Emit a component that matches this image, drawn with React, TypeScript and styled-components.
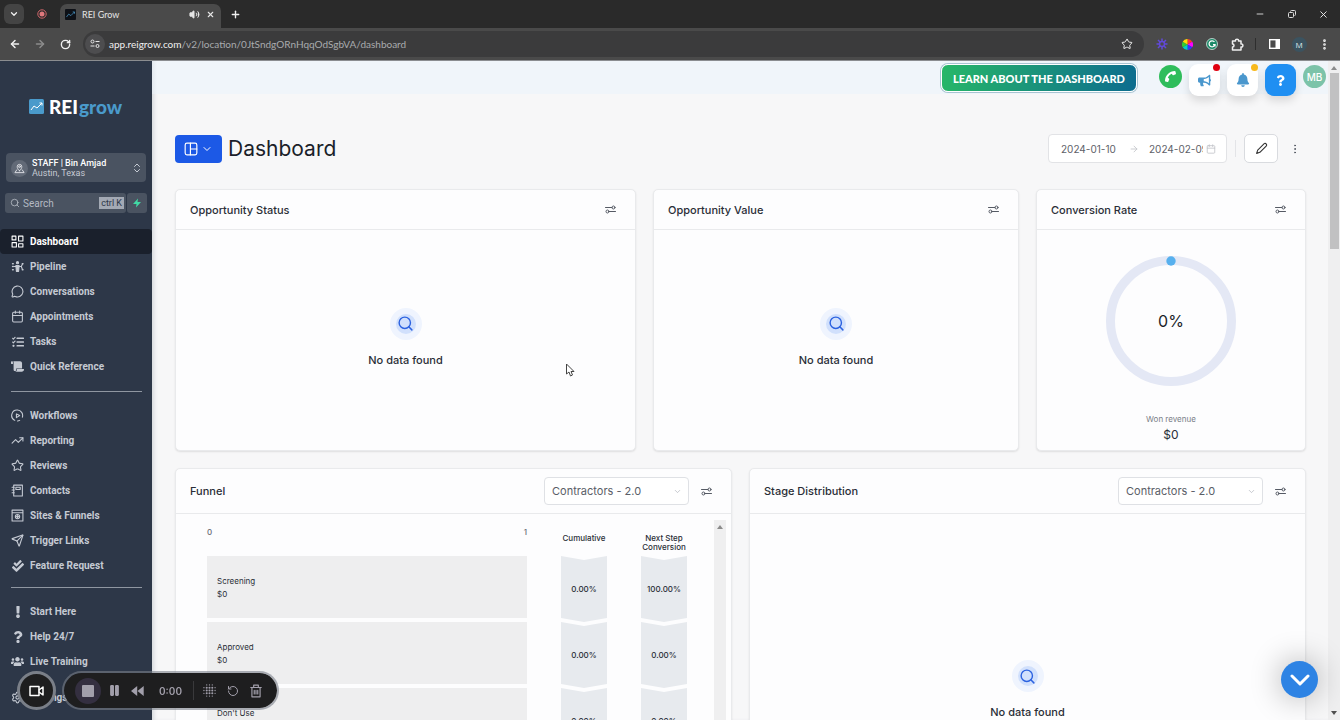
import { useState } from 'react'
import type { ReactNode } from 'react'

import styled, { createGlobalStyle } from 'styled-components'
import {
  ArrowLeft,
  ArrowRight,
  Calendar,
  ChevronDown,
  ChevronsUpDown,
  MessageCircle,
  Minus,
  MoreVertical,
  Pause,
  Plus,
  RotateCw,
  RotateCcw,
  Search,
  Send,
  Settings,
  Star,
  TrendingUp,
  Volume2,
  X,
} from 'lucide-react'
import {
  FaBell,
  FaBullhorn,
  FaCheckDouble,
  FaExclamation,
  FaPhoneAlt,
  FaQuestion,
  FaScroll,
  FaTasks,
  FaUsers,
} from 'react-icons/fa'

const GlobalStyle = createGlobalStyle`
  * {
    box-sizing: border-box;
  }
  body {
    margin: 0;
    background: #f7f7f8;
    font-family: Inter, 'Liberation Sans', sans-serif;
    color: #2a2e37;
  }
  button, input, select {
    font: inherit;
    color: inherit;
    margin: 0;
    padding: 0;
    border: 0;
    background: none;
  }
  a {
    color: inherit;
    text-decoration: none;
  }
  h1, h2, p {
    margin: 0;
    font-weight: 400;
  }
  svg {
    display: block;
    flex-shrink: 0;
  }
`

/* ---------- browser window ---------- */

const Window = styled.div`
  display: flex;
  flex-direction: column;
  height: 100vh;
  overflow: hidden;
`

const TabStrip = styled.div`
  display: flex;
  align-items: flex-end;
  height: 28px;
  padding: 0 8px 0 4px;
  background: #2a2a2a;
  color: #e6e6e6;
  font-family: Lato, sans-serif;
  font-size: 9px;
`

const ChromeButton = styled.button<{ w?: number; dim?: boolean }>`
  display: flex;
  align-items: center;
  justify-content: center;
  width: ${props => props.w || 20}px;
  height: 20px;
  color: ${props => (props.dim ? '#8c8c8c' : '#f0f0f0')};
`

const TabSearch = styled(ChromeButton)`
  margin-bottom: 4px;
  border-radius: 6px;
  background: #444;
`

const RecordTab = styled.div`
  display: flex;
  align-items: center;
  justify-content: center;
  width: 36px;
  height: 28px;
`

const Tab = styled.div`
  display: flex;
  align-items: center;
  gap: 6px;
  width: 161px;
  height: 24px;
  padding: 0 6px 4px 5px;
  border-radius: 7px 7px 0 0;
  background: #4a4a4a;
  span {
    flex: 1;
  }
`

const TabActions = styled.div`
  display: flex;
  align-items: center;
  height: 28px;
  padding-left: 4px;
`

const WindowActions = styled(TabActions)`
  gap: 12px;
  margin-left: auto;
  padding: 0;
`

const Toolbar = styled.div`
  display: flex;
  align-items: center;
  height: 33px;
  padding: 0 6px 0 5px;
  border-bottom: 1px solid #8b8d90;
  background: #4a4a4a;
`

const ToolbarNav = styled.div`
  display: flex;
  gap: 5px;
  margin-right: 8px;
`

const AddressBar = styled.div`
  display: flex;
  flex: 1;
  align-items: center;
  height: 26px;
  padding: 0 7px 0 2px;
  border-radius: 13px;
  background: #3b3b3c;
  color: #a9abae;
  font-family: Lato, sans-serif;
  font-size: 10px;
  p {
    flex: 1;
    padding-left: 4px;
  }
  b {
    color: #f0f0f0;
    font-weight: 400;
  }
`

const SiteInfo = styled.span`
  display: flex;
  align-items: center;
  justify-content: center;
  width: 20px;
  height: 20px;
  border-radius: 50%;
  background: #4d4d4f;
`

const Extensions = styled.div`
  display: flex;
  align-items: center;
  gap: 5px;
  margin-left: 8px;
`

const Divider = styled.span`
  width: 1px;
  height: 12px;
  margin: 0 3px;
  background: #2e2e2e;
`

const ProfileDot = styled.span`
  display: flex;
  align-items: center;
  justify-content: center;
  width: 15px;
  height: 15px;
  border-radius: 50%;
  background: #3b5360;
  color: #dfe7ea;
  font-family: 'Open Sans', sans-serif;
  font-size: 8px;
`

/* ---------- sidebar ---------- */

const Page = styled.div`
  display: flex;
  flex: 1;
  min-height: 0;
`

const Sidebar = styled.aside`
  display: flex;
  flex-direction: column;
  width: 152px;
  overflow: hidden;
  background: #2d3748;
  color: #c5cad3;
  font-family: Roboto, sans-serif;
`

const Logo = styled.a`
  display: flex;
  align-items: center;
  gap: 5px;
  height: 92px;
  padding: 0 0 2px 29px;
  color: #fff;
  font-family: Lato, sans-serif;
  font-size: 19px;
  font-weight: 900;
  b {
    padding-left: 1px;
    color: #4a9acb;
    font-weight: 900;
  }
`

const LocationButton = styled.button`
  display: flex;
  align-items: center;
  gap: 4px;
  height: 29px;
  margin: 0 6px 11px;
  padding: 1px 3px 0 5px;
  border-radius: 4px;
  background: #4a5361;
  text-align: left;
  font-size: 9px;
  line-height: 10px;
  span {
    flex: 1;
  }
  b {
    display: block;
    color: #fff;
    font-weight: 500;
  }
`

const PinBadge = styled.i`
  display: flex;
  align-items: center;
  justify-content: center;
  width: 17px;
  height: 17px;
  border-radius: 50%;
  background: #626a77;
  color: #e2e5e9;
`

const SearchRow = styled.div`
  display: flex;
  gap: 1px;
  height: 20px;
  margin: 0 5px 16px;
`

const SearchBox = styled.label`
  display: flex;
  flex: 1;
  align-items: center;
  gap: 3px;
  min-width: 0;
  padding: 0 2px 0 5px;
  border-radius: 3px;
  background: #4a5361;
  color: #b4bac3;
  font-size: 10px;
  input {
    flex: 1;
    min-width: 0;
  }
  input::placeholder {
    color: #b4bac3;
    opacity: 1;
  }
  kbd {
    padding: 0 2px;
    background: #a3a9b4;
    color: #2d3748;
    font-family: Roboto, sans-serif;
    font-size: 9px;
    line-height: 12px;
  }
`

const BoltButton = styled.button`
  display: flex;
  align-items: center;
  justify-content: center;
  width: 20px;
  border-radius: 3px;
  background: #4a5361;
  color: #41d9a5;
`

const NavGroup = styled.nav<{ gap: number }>`
  display: flex;
  flex-direction: column;
  padding-bottom: ${props => props.gap}px;
`

const NavLink = styled.a<{ active?: boolean }>`
  display: flex;
  align-items: center;
  gap: 6px;
  height: 25px;
  padding-left: 11px;
  border-radius: 4px;
  background: ${props => (props.active ? '#1a202c' : 'transparent')};
  color: ${props => (props.active ? '#fff' : '#c5cad3')};
  font-size: 10px;
  font-weight: 700;
`

const NavIcon = styled.i`
  display: flex;
  justify-content: center;
  width: 13px;
`

const Rule = styled.hr`
  width: 131px;
  height: 1px;
  margin: 0 auto 11px;
  border: 0;
  background: #8f96a1;
`

/* ---------- main column ---------- */

const Main = styled.main`
  flex: 1;
  min-width: 0;
  overflow: hidden;
  background: #f7f7f8;
  box-shadow: inset 4px 0 4px -2px #d5d8dd;
`

const TopBar = styled.header`
  display: flex;
  align-items: flex-start;
  justify-content: flex-end;
  gap: 7px;
  height: 33px;
  padding: 3px 2px 0;
  background: linear-gradient(90deg, #e3e9ef, #f0f5fa 5px);
`

const LearnButton = styled.button`
  height: 28px;
  margin-right: 15px;
  padding: 0 11px;
  border: 1px solid #fff;
  border-radius: 7px;
  background: linear-gradient(100deg, #27b768, #0d6c8f);
  box-shadow: 0 0 0 1px #a9c4d2;
  color: #fff;
  font-family: Lato, sans-serif;
  font-size: 11px;
  font-weight: 900;
  white-space: nowrap;
`

const RoundBadge = styled.button<{ bg: string }>`
  display: flex;
  align-items: center;
  justify-content: center;
  width: 23px;
  height: 23px;
  margin-top: 1px;
  border-radius: 50%;
  background: ${props => props.bg};
  color: #fff;
  font-size: 10px;
  font-weight: 500;
`

const TileButton = styled.button<{ filled?: boolean }>`
  position: relative;
  display: flex;
  align-items: center;
  justify-content: center;
  width: 31px;
  height: 32px;
  border-radius: 9px;
  background: ${props => (props.filled ? '#1f8ff2' : '#fff')};
  box-shadow: 0 5px 8px #0000001f;
  color: ${props => (props.filled ? '#fff' : '#4a97cd')};
`

const Dot = styled.span<{ color: string }>`
  position: absolute;
  top: 0;
  right: 0;
  width: 7px;
  height: 7px;
  border-radius: 50%;
  background: ${props => props.color};
`

const Content = styled.div`
  padding: 40px 22px 0 23px;
`

const TitleRow = styled.div`
  display: flex;
  align-items: center;
  height: 29px;
  margin-bottom: 26px;
  padding-right: 3px;
  h1 {
    flex: 1;
    padding-left: 6px;
    color: #1b1f2a;
    font-size: 21px;
    line-height: 29px;
  }
`

const LayoutButton = styled.button`
  display: flex;
  align-items: center;
  justify-content: center;
  gap: 3px;
  width: 47px;
  height: 28px;
  border-radius: 4px;
  background: #1c59e6;
  color: #fff;
`

const DateRange = styled.div`
  display: flex;
  align-items: center;
  width: 179px;
  height: 29px;
  padding: 0 10px 0 12px;
  border: 1px solid #e2e3e6;
  border-radius: 4px;
  background: #fff;
  color: #c0c3c8;
  input {
    width: 68px;
    color: #5d6168;
    font-size: 10px;
  }
  input:last-of-type {
    width: 54px;
    margin-left: 10px;
  }
  svg:last-of-type {
    margin-left: auto;
  }
`

const Separator = styled.span`
  width: 1px;
  height: 17px;
  margin: 0 8px;
  background: #e3e4e7;
`

const EditButton = styled.button`
  display: flex;
  align-items: center;
  justify-content: center;
  width: 34px;
  height: 29px;
  margin-right: 9px;
  border: 1px solid #d9dbdf;
  border-radius: 5px;
  background: #fff;
  color: #333;
`

const IconButton = styled.button`
  display: flex;
  align-items: center;
  justify-content: center;
  width: 16px;
  height: 20px;
  color: #555a64;
`

const CardRow = styled.div<{ columns: string }>`
  display: grid;
  grid-template-columns: ${props => props.columns};
  gap: 17px;
  margin-bottom: 17px;
`

const CardBox = styled.section`
  display: flex;
  flex-direction: column;
  min-width: 0;
  border: 1px solid #e9eaec;
  border-radius: 5px;
  background: #fdfdfe;
  box-shadow: 0 1px 2px #0000001a;
`

const CardHeader = styled.div<{ tall?: boolean }>`
  display: flex;
  align-items: center;
  gap: 9px;
  height: ${props => (props.tall ? 45 : 40)}px;
  padding: 0 17px 0 14px;
  border-bottom: 1px solid #e9eaec;
  h2 {
    flex: 1;
    font-size: 11px;
    font-weight: 500;
  }
`

const CardBody = styled.div<{ h: number; top?: number; bottom?: number }>`
  display: flex;
  flex-direction: column;
  align-items: center;
  justify-content: center;
  height: ${props => props.h}px;
  padding-top: ${props => props.top || 0}px;
  padding-bottom: ${props => props.bottom || 0}px;
`

const Halo = styled.span`
  display: flex;
  align-items: center;
  justify-content: center;
  width: 32px;
  height: 32px;
  margin-bottom: 11px;
  border: 6px solid #eff4fe;
  border-radius: 50%;
  background: #d1e0fc;
  color: #2c62e0;
`

const EmptyText = styled.p`
  font-size: 11px;
  font-weight: 500;
  line-height: 18px;
`

const SelectBox = styled.label`
  display: flex;
  align-items: center;
  width: 145px;
  height: 28px;
  padding: 0 6px 0 7px;
  border: 1px solid #dfe1e5;
  border-radius: 4px;
  background: #fff;
  color: #b5b9c0;
  font-size: 11px;
  select {
    flex: 1;
    min-width: 0;
    appearance: none;
    color: #5a5e67;
  }
`

const Gauge = styled.div`
  display: grid;
  place-items: center;
  margin-bottom: 26px;
  > * {
    grid-area: 1 / 1;
  }
  strong {
    color: #1b1f2a;
    font-size: 16px;
    font-weight: 400;
  }
`

const Caption = styled.p`
  color: #7a7e87;
  font-size: 8px;
  line-height: 14px;
`

const Amount = styled.p`
  font-size: 12px;
  line-height: 18px;
`

const FunnelBody = styled.div`
  display: flex;
  align-items: flex-start;
  height: 355px;
  padding: 6px 5px 0 31px;
`

const FunnelGrid = styled.div`
  display: grid;
  flex: 1;
  grid-template-columns: 1fr 46px 46px;
  grid-template-rows: 36px;
  grid-auto-rows: 66px;
  column-gap: 34px;
  font-size: 8px;
  font-weight: 500;
  line-height: 9px;
`

const FunnelHead = styled.div`
  display: grid;
  grid-column: 1 / -1;
  grid-template-columns: subgrid;
  padding-top: 8px;
  text-align: center;
`

const FunnelScale = styled.div`
  display: flex;
  justify-content: space-between;
  color: #6a6e76;
`

const HeadLabel = styled.span`
  display: flex;
  justify-content: center;
  padding-top: 6px;
`

const Stage = styled.div`
  height: 62px;
  padding: 19px 10px;
  background: #eeeeef;
  line-height: 13px;
`

const Percent = styled.div`
  display: flex;
  align-items: center;
  justify-content: center;
  height: 66px;
  background: #e7eaee;
  clip-path: polygon(0 0, 50% 4px, 100% 0, 100% 62px, 50% 66px, 0 62px);
`

const ScrollTrack = styled.div`
  display: flex;
  flex-direction: column;
  align-items: center;
  justify-content: space-between;
  width: 12px;
  height: 100%;
  padding: 5px 0;
  background: #efeff0;
`

const FunnelTrack = styled(ScrollTrack)`
  margin-left: 27px;
`

const ScrollThumb = styled.div`
  width: 9px;
  height: 176px;
  margin: 3px 0 auto;
  background: #c1c1c2;
`

/* ---------- things floating over the page ---------- */

const RecorderBar = styled.div`
  position: fixed;
  bottom: 10px;
  left: 17px;
  display: flex;
  align-items: center;
  gap: 6px;
`

const CameraButton = styled.button`
  display: flex;
  align-items: center;
  justify-content: center;
  width: 39px;
  height: 39px;
  border: 3px solid #7a7f88;
  border-radius: 50%;
  background: #1e1e1f;
  color: #fff;
`

const RecorderPill = styled.div`
  display: flex;
  align-items: center;
  height: 39px;
  padding: 0 10px 0 11px;
  border: 2px solid #7a7f8899;
  border-radius: 20px;
  background: #1e1e1f;
  background-clip: padding-box;
  color: #a29fab;
  font-size: 10px;
  font-weight: 600;
  time {
    width: 43px;
    text-align: center;
  }
`

const RecorderButton = styled.button<{ active?: boolean }>`
  display: flex;
  align-items: center;
  justify-content: center;
  width: ${props => (props.active ? 26 : 23)}px;
  height: 26px;
  margin-right: ${props => (props.active ? 2 : 0)}px;
  border-radius: 50%;
  background: ${props => (props.active ? '#342f40' : 'transparent')};
`

const PillDivider = styled.span`
  width: 1px;
  height: 19px;
  margin: 0 4px 0 1px;
  background: #39393b;
`

const HelpFab = styled.button`
  position: fixed;
  right: 22px;
  bottom: 22px;
  display: flex;
  align-items: center;
  justify-content: center;
  width: 37px;
  height: 37px;
  border-radius: 50%;
  background: #2d83e4;
  box-shadow: 0 0 32px #00000055;
  color: #fff;
`

const Pointer = styled.svg`
  position: fixed;
  top: 363px;
  left: 565px;
`

/* ---------- icons ---------- */

const stroke = {
  fill: 'none',
  stroke: 'currentColor',
  strokeLinecap: 'round' as const,
  strokeLinejoin: 'round' as const,
}

function Svg({ size = 13, box = 24, children }: any) {
  return (
    <svg
      width={size}
      height={size}
      viewBox={`0 0 ${box} ${box}`}
      strokeWidth={2}
      {...stroke}
    >
      {children}
    </svg>
  )
}

const SlidersIcon = () => (
  <svg width="11" height="9" viewBox="0 0 22 18" strokeWidth={2} {...stroke}>
    <path d="M1 5h13M8 13h13" />
    <circle cx="17" cy="5" r="3" />
    <circle cx="5" cy="13" r="3" />
  </svg>
)

const GridIcon = () => (
  <Svg>
    <path d="M2 2h7v7H2zM14 2h8v9h-8zM2 14h8v8H2zM14 16h8v6h-8z" />
  </Svg>
)

const PipelineIcon = () => (
  <Svg>
    <circle cx="12" cy="5" r="2" fill="currentColor" />
    <path d="M9 10h6l-1 11h-4z" fill="currentColor" />
    <path d="M5 12h4M15 12h4M19 12l2-4M19 12l2 5" />
    <path d="M3 7h1M3 12h1M3 18h1M21 7h1M21 18h1" strokeWidth={3} />
  </Svg>
)

const WorkflowIcon = () => (
  <Svg>
    <path d="M7 21A10 10 0 0 1 12 2a10 10 0 0 1 9 13" />
    <path d="M12 22a10 10 0 0 0 4-1" />
    <path d="M10 9v7l6-4z" />
  </Svg>
)

const ContactsIcon = () => (
  <Svg>
    <path d="M5 2h16v20H5zM9 6h8v4H9z" />
    <path d="M2 6h4M2 11h4M2 16h4" />
  </Svg>
)

const SitesIcon = () => (
  <Svg>
    <path d="M2 2h20v20H2zM2 7h20" />
    <circle cx="12" cy="14" r="4" />
    <path d="M12 12v4M10 14h4" />
  </Svg>
)

const LogoIcon = ({ size, bg }: { size: number; bg: string }) => (
  <svg width={size} height={size} viewBox="0 0 15 15">
    <rect width="15" height="15" rx="1.5" fill={bg} />
    <path
      d="M2 11l3-4 3 2 5-5M10.5 4H13v2.5"
      fill="none"
      stroke={bg === '#0d1016' ? '#4a9acb' : '#fff'}
    />
  </svg>
)

const PinIcon = () => (
  <Svg size={11}>
    <path d="M12 17c-4-4-5-6-5-9a5 5 0 0 1 10 0c0 3-1 5-5 9z" />
    <circle cx="12" cy="8" r="2" />
    <path d="M6 15l-4 6h20l-4-6" />
  </Svg>
)

const BoltIcon = () => (
  <svg width="10" height="10" viewBox="0 0 20 20" fill="currentColor">
    <path d="M12 1L2 12h7l-1 7L18 8h-7z" />
  </svg>
)

const LayoutIcon = () => (
  <Svg size={14}>
    <rect x="2" y="2" width="20" height="20" rx="3" />
    <path d="M11 2v20M11 12h11" />
  </Svg>
)

const PencilIcon = () => (
  <Svg size={13}>
    <path d="M3 21l2-6L17 3c2-2 6 2 4 4L9 19z" />
  </Svg>
)

const PuzzleIcon = () => (
  <svg width="13" height="13" viewBox="0 0 26 26" strokeWidth={3} {...stroke}>
    <path d="M3 6h6c-1-5 7-5 6 0h5v6c5-1 5 7 0 6v6H3v-6c4 0 4-6 0-6z" />
  </svg>
)

const TuneIcon = () => (
  <svg width="10" height="10" viewBox="0 0 20 20" fill="none" stroke="#e6e6e6" strokeWidth="2">
    <circle cx="5" cy="5" r="3" />
    <circle cx="15" cy="14" r="3" />
    <path d="M11 5h8M1 14h8" />
  </svg>
)

const TargetIcon = () => (
  <svg width="10" height="10" viewBox="0 0 10 10">
    <circle cx="5" cy="5" r="4.200" fill="none" stroke="#d0666b" />
    <circle cx="5" cy="5" r="2.500" fill="#e0797d" />
  </svg>
)

const FlowerIcon = () => (
  <svg width="12" height="12" viewBox="0 0 24 24" stroke="#6149d8" strokeWidth="3" fill="none">
    <path d="M12 1v6M12 17v6M1 12h6M17 12h6M4 4l4 4M16 16l4 4M20 4l-4 4M8 16l-4 4" />
    <circle cx="12" cy="12" r="5" />
  </svg>
)

const wheel = ['#f33', '#f0f', '#33f', '#0cc', '#3c3', '#fd0']

const WheelIcon = () => (
  <svg width="11" height="11" viewBox="-10 -10 20 20">
    {wheel.map((color, i) => (
      <path
        key={color}
        d="M0 0L0-10A10 10 0 0 1 8.700-5z"
        fill={color}
        transform={`rotate(${i * 60})`}
      />
    ))}
  </svg>
)

const GrammarIcon = () => (
  <svg width="12" height="12" viewBox="0 0 24 24" fill="none" strokeWidth="2.500">
    <circle cx="12" cy="12" r="11" fill="#1b8a68" stroke="#dfeee9" strokeWidth="1.500" />
    <path d="M17 8a6 6 0 1 0 1 5h-4M18 13v4" stroke="#fff" />
  </svg>
)

const PanelIcon = () => (
  <svg width="11" height="10" viewBox="0 0 11 10">
    <rect x=".7" y=".7" width="9.600" height="8.600" fill="none" stroke="#fff" strokeWidth="1.400" />
    <path d="M6.500 1H10v8H6.500z" fill="#fff" />
  </svg>
)

const RestoreIcon = () => (
  <svg width="8" height="8" viewBox="0 0 8 8" fill="none" stroke="#ddd">
    <rect x=".5" y="2.500" width="5" height="5" rx="1" />
    <path d="M2.500 1.500Q2.500.500 3.500.500h3q1 0 1 1v3q0 1-1 1" />
  </svg>
)

const Triangle = ({ down, dark }: { down?: boolean; dark?: boolean }) => (
  <svg width="6" height="4" viewBox="0 0 6 4" fill={dark ? '#505050' : '#8b8b8b'}>
    <path d={down ? 'M0 0h6L3 4z' : 'M0 4h6L3 0z'} />
  </svg>
)

const CameraIcon = () => (
  <svg width="15" height="12" viewBox="0 0 15 12" strokeWidth="1.500" {...stroke}>
    <rect x="1" y="1.500" width="9" height="9" />
    <path d="M10 5l4-3v8l-4-3" />
  </svg>
)

const RewindIcon = () => (
  <svg width="13" height="10" viewBox="0 0 13 10" fill="currentColor">
    <path d="M6.200 0v10L0 5zM12.700 0v10L6.500 5z" />
  </svg>
)

const BlurIcon = () => (
  <svg width="13" height="13" viewBox="0 0 14 14" fill="currentColor">
    {[1, 4, 7, 10, 13].map(x =>
      [1, 4, 7, 10, 13].map(y => {
        const edge = [x, y].filter(n => n === 1 || n === 13).length
        // corners stay empty
        if (edge === 2) return null
        return <circle key={`${x}-${y}`} cx={x} cy={y} r={edge ? 0.7 : 1.1} />
      }),
    )}
  </svg>
)

const TrashIcon = () => (
  <Svg size={14}>
    <path d="M3 6h18M8 6V2h8v4M5 6v16h14V6M9 11v6M12 11v6M15 11v6" />
  </Svg>
)

/* ---------- data ---------- */

type NavItem = { label: string; icon: ReactNode }

const crmLinks: NavItem[] = [
  { label: 'Dashboard', icon: <GridIcon /> },
  { label: 'Pipeline', icon: <PipelineIcon /> },
  { label: 'Conversations', icon: <MessageCircle size={13} /> },
  { label: 'Appointments', icon: <Calendar size={13} /> },
  { label: 'Tasks', icon: <FaTasks size={12} /> },
  { label: 'Quick Reference', icon: <FaScroll size={13} /> },
]

const toolLinks: NavItem[] = [
  { label: 'Workflows', icon: <WorkflowIcon /> },
  { label: 'Reporting', icon: <TrendingUp size={13} /> },
  { label: 'Reviews', icon: <Star size={13} /> },
  { label: 'Contacts', icon: <ContactsIcon /> },
  { label: 'Sites & Funnels', icon: <SitesIcon /> },
  { label: 'Trigger Links', icon: <Send size={13} /> },
  { label: 'Feature Request', icon: <FaCheckDouble size={12} /> },
]

const helpLinks: NavItem[] = [
  { label: 'Start Here', icon: <FaExclamation size={12} /> },
  { label: 'Help 24/7', icon: <FaQuestion size={12} /> },
  { label: 'Live Training', icon: <FaUsers size={13} /> },
]

const stages = [
  { name: 'Screening', value: '$0', cumulative: '0.00%', next: '100.00%' },
  { name: 'Approved', value: '$0', cumulative: '0.00%', next: '0.00%' },
  { name: "Don't Use", value: '$0', cumulative: '0.00%', next: '0.00%' },
]

/* ---------- parts ---------- */

function BrowserChrome() {
  return (
    <>
      <TabStrip>
        <TabSearch aria-label="Search tabs">
          <ChevronDown size={10} strokeWidth={3} />
        </TabSearch>
        <RecordTab>
          <TargetIcon />
        </RecordTab>
        <Tab>
          <LogoIcon size={11} bg="#0d1016" />
          <span>REI Grow</span>
          <Volume2 size={11} fill="currentColor" />
          <X size={9} strokeWidth={3} />
        </Tab>
        <TabActions>
          <ChromeButton aria-label="New tab">
            <Plus size={11} strokeWidth={3} />
          </ChromeButton>
        </TabActions>
        <WindowActions>
          <ChromeButton aria-label="Minimize">
            <Minus size={10} />
          </ChromeButton>
          <ChromeButton aria-label="Restore">
            <RestoreIcon />
          </ChromeButton>
          <ChromeButton w={18} aria-label="Close">
            <X size={11} />
          </ChromeButton>
        </WindowActions>
      </TabStrip>
      <Toolbar>
        <ToolbarNav>
          <ChromeButton aria-label="Back">
            <ArrowLeft size={12} strokeWidth={3} />
          </ChromeButton>
          <ChromeButton dim aria-label="Forward">
            <ArrowRight size={12} strokeWidth={3} />
          </ChromeButton>
          <ChromeButton aria-label="Reload">
            <RotateCw size={11} strokeWidth={3} />
          </ChromeButton>
        </ToolbarNav>
        <AddressBar>
          <SiteInfo>
            <TuneIcon />
          </SiteInfo>
          <p>
            <b>app.reigrow.com</b>/v2/location/0JtSndgORnHqqOdSgbVA/dashboard
          </p>
          <ChromeButton aria-label="Bookmark">
            <Star size={12} />
          </ChromeButton>
        </AddressBar>
        <Extensions>
          <ChromeButton aria-label="Recorder">
            <FlowerIcon />
          </ChromeButton>
          <ChromeButton aria-label="Color picker">
            <WheelIcon />
          </ChromeButton>
          <ChromeButton aria-label="Grammar">
            <GrammarIcon />
          </ChromeButton>
          <ChromeButton aria-label="Extensions">
            <PuzzleIcon />
          </ChromeButton>
          <Divider />
          <ChromeButton aria-label="Side panel">
            <PanelIcon />
          </ChromeButton>
          <ChromeButton aria-label="Profile">
            <ProfileDot>M</ProfileDot>
          </ChromeButton>
          <ChromeButton aria-label="Menu">
            <MoreVertical size={13} strokeWidth={3} />
          </ChromeButton>
        </Extensions>
      </Toolbar>
    </>
  )
}

function NavLinks({ items, active }: { items: NavItem[]; active?: string }) {
  return (
    <>
      {items.map(item => (
        <NavLink key={item.label} href="#" active={item.label === active}>
          <NavIcon>{item.icon}</NavIcon>
          {item.label}
        </NavLink>
      ))}
    </>
  )
}

function SideMenu() {
  return (
    <Sidebar>
      <Logo href="#">
        <LogoIcon size={15} bg="#4a9acb" />
        <span>
          REI<b>grow</b>
        </span>
      </Logo>
      <LocationButton>
        <PinBadge>
          <PinIcon />
        </PinBadge>
        <span>
          <b>STAFF | Bin Amjad</b>
          Austin, Texas
        </span>
        <ChevronsUpDown size={12} />
      </LocationButton>
      <SearchRow>
        <SearchBox>
          <Search size={10} />
          <input placeholder="Search" aria-label="Search" />
          <kbd>ctrl K</kbd>
        </SearchBox>
        <BoltButton aria-label="Quick actions">
          <BoltIcon />
        </BoltButton>
      </SearchRow>
      <NavGroup gap={12}>
        <NavLinks items={crmLinks} active="Dashboard" />
      </NavGroup>
      <Rule />
      <NavGroup gap={9}>
        <NavLinks items={toolLinks} />
      </NavGroup>
      <Rule />
      <NavGroup gap={11}>
        <NavLinks items={helpLinks} />
      </NavGroup>
      <NavLink href="#">
        <NavIcon>
          <Settings size={13} />
        </NavIcon>
        Settings
      </NavLink>
    </Sidebar>
  )
}

function Card({ title, tall, children }: any) {
  const [board, setBoard] = useState('Contractors - 2.0')

  return (
    <CardBox>
      <CardHeader tall={tall}>
        <h2>{title}</h2>
        {tall && (
          <SelectBox>
            <select
              aria-label={`${title} pipeline`}
              value={board}
              onChange={e => setBoard(e.target.value)}
            >
              <option>Contractors - 2.0</option>
            </select>
            <ChevronDown size={9} />
          </SelectBox>
        )}
        <IconButton aria-label={`${title} settings`}>
          <SlidersIcon />
        </IconButton>
      </CardHeader>
      {children}
    </CardBox>
  )
}

function NoData({ h }: { h: number }) {
  return (
    <CardBody h={h} bottom={4}>
      <Halo>
        <Search size={17} />
      </Halo>
      <EmptyText>No data found</EmptyText>
    </CardBody>
  )
}

function ConversionRate() {
  return (
    <CardBody h={220} top={20}>
      <Gauge>
        <svg width="130" height="130" viewBox="0 0 130 130">
          <circle cx="65" cy="65" r="60.500" fill="none" stroke="#e4e8f5" strokeWidth="9" />
          <circle cx="65" cy="5" r="4.700" fill="#57b0ee" />
        </svg>
        <strong>0%</strong>
      </Gauge>
      <Caption>Won revenue</Caption>
      <Amount>$0</Amount>
    </CardBody>
  )
}

function Funnel() {
  return (
    <FunnelBody>
      <FunnelGrid>
        <FunnelHead>
          <FunnelScale>
            <span>0</span>
            <span>1</span>
          </FunnelScale>
          <HeadLabel>Cumulative</HeadLabel>
          <HeadLabel>Next Step Conversion</HeadLabel>
        </FunnelHead>
        {stages.map(stage => (
          <FunnelRow key={stage.name} {...stage} />
        ))}
      </FunnelGrid>
      <FunnelTrack>
        <Triangle />
      </FunnelTrack>
    </FunnelBody>
  )
}

function FunnelRow({ name, value, cumulative, next }: any) {
  return (
    <>
      <Stage>
        <p>{name}</p>
        <p>{value}</p>
      </Stage>
      <Percent>{cumulative}</Percent>
      <Percent>{next}</Percent>
    </>
  )
}

function Recorder() {
  return (
    <RecorderBar>
      <CameraButton aria-label="Camera">
        <CameraIcon />
      </CameraButton>
      <RecorderPill>
        <RecorderButton active aria-label="Stop">
          <svg width="12" height="12" fill="currentColor">
            <rect width="12" height="12" rx="1" />
          </svg>
        </RecorderButton>
        <RecorderButton aria-label="Pause">
          <Pause size={13} fill="currentColor" />
        </RecorderButton>
        <RecorderButton aria-label="Rewind">
          <RewindIcon />
        </RecorderButton>
        <time>0:00</time>
        <PillDivider />
        <RecorderButton aria-label="Blur">
          <BlurIcon />
        </RecorderButton>
        <RecorderButton aria-label="Restart">
          <RotateCcw size={12} />
        </RecorderButton>
        <RecorderButton aria-label="Delete">
          <TrashIcon />
        </RecorderButton>
      </RecorderPill>
    </RecorderBar>
  )
}

export default function App() {
  return (
    <Window>
      <GlobalStyle />
      <BrowserChrome />
      <Page>
        <SideMenu />
        <Main>
          <TopBar>
            <LearnButton>LEARN ABOUT THE DASHBOARD</LearnButton>
            <RoundBadge bg="#2fbd5b" aria-label="Call">
              <FaPhoneAlt size={11} transform="rotate(90)" />
            </RoundBadge>
            <TileButton aria-label="Announcements">
              <FaBullhorn size={13} />
              <Dot color="#e0000f" />
            </TileButton>
            <TileButton aria-label="Notifications">
              <FaBell size={14} />
              <Dot color="#f8b91c" />
            </TileButton>
            <TileButton filled aria-label="Help">
              <FaQuestion size={11} />
            </TileButton>
            <RoundBadge bg="#7cc3a9">MB</RoundBadge>
          </TopBar>
          <Content>
            <TitleRow>
              <LayoutButton aria-label="Switch dashboard">
                <LayoutIcon />
                <ChevronDown size={12} />
              </LayoutButton>
              <h1>Dashboard</h1>
              <DateRange>
                <input aria-label="Start date" defaultValue="2024-01-10" />
                <ArrowRight size={10} />
                <input aria-label="End date" defaultValue="2024-02-09" />
                <Calendar size={10} />
              </DateRange>
              <Separator />
              <EditButton aria-label="Edit">
                <PencilIcon />
              </EditButton>
              <IconButton aria-label="More">
                <MoreVertical size={12} />
              </IconButton>
            </TitleRow>
            <CardRow columns="461fr 366fr 270fr">
              <Card title="Opportunity Status">
                <NoData h={220} />
              </Card>
              <Card title="Opportunity Value">
                <NoData h={220} />
              </Card>
              <Card title="Conversion Rate">
                <ConversionRate />
              </Card>
            </CardRow>
            <CardRow columns="1fr 1fr">
              <Card tall title="Funnel">
                <Funnel />
              </Card>
              <Card tall title="Stage Distribution">
                <NoData h={357} />
              </Card>
            </CardRow>
          </Content>
        </Main>
        <ScrollTrack>
          <Triangle />
          <ScrollThumb />
          <Triangle down dark />
        </ScrollTrack>
      </Page>
      <Recorder />
      <HelpFab aria-label="Open chat">
        <svg width="20" height="12" viewBox="0 0 20 12" strokeWidth="3" {...stroke}>
          <path d="M2 2l8 8 8-8" />
        </svg>
      </HelpFab>
      <Pointer width="10" height="14" viewBox="0 0 10 14" fill="#fff" stroke="#444">
        <path d="M1.500 1v10l2.500-2 1.500 4 2-1-1.500-3.500h3z" />
      </Pointer>
    </Window>
  )
}
